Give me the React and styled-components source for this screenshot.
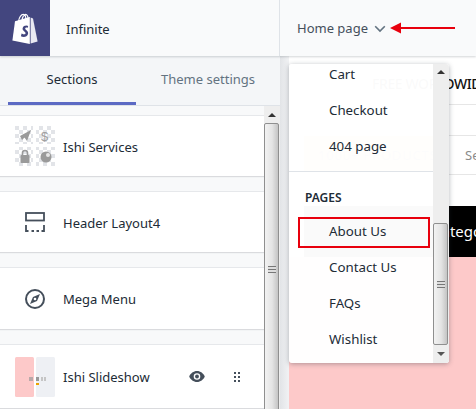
import React from "react";
import styled, { createGlobalStyle } from "styled-components";

const Global = createGlobalStyle`
  html, body { margin: 0; padding: 0; width: 476px; height: 409px; overflow: hidden; background: #fff; }
  * { box-sizing: border-box; }
  body { font-family: "Noto Sans", "Open Sans", sans-serif; font-size: 13px; color: #212b36; }
`;

const Page = styled.div`
  position: relative;
  width: 476px;
  height: 409px;
  overflow: hidden;
  display: flex;
  flex-direction: column;
`;
const TopBar = styled.header`
  flex: 0 0 56px;
  display: flex;
  align-items: stretch;
  background: #f9fafb;
  box-shadow: 0 1px 2px rgba(33, 43, 54, 0.2);
  position: relative;
  z-index: 2;
`;
const LogoBox = styled.div`
  flex: 0 0 50px;
  background: #43467f;
  display: flex;
  align-items: center;
  justify-content: center;
`;
const StoreName = styled.div`
  flex: 0 0 230px;
  padding: 1px 0 0 16px;
  display: flex;
  align-items: center;
  font-size: 13px;
  border-right: 1px solid #dfe3e8;
`;
const PagePicker = styled.div`
  flex: 1;
  display: flex;
  align-items: center;
  padding-left: 17px;
  font-size: 13px;
  color: #454f5b;
  gap: 6px;
`;
const Main = styled.div`
  flex: 1;
  display: flex;
  min-height: 0;
`;
const Sidebar = styled.aside`
  flex: 0 0 280px;
  display: flex;
  flex-direction: column;
  min-height: 0;
  background: #f4f6f8;
`;
const Tabs = styled.nav`
  flex: 0 0 49px;
  display: flex;
  padding-left: 8px;
`;
const Tab = styled.div`
  flex: ${(p) => (p.$active ? "0 0 128px" : "1")};
  height: 49px;
  text-align: center;
  line-height: 47px;
  font-size: 13px;
  color: ${(p) => (p.$active ? "#212b36" : "#637381")};
  border-bottom: 3px solid ${(p) => (p.$active ? "#5c6ac4" : "transparent")};
`;
const SideBody = styled.div`
  flex: 1;
  display: flex;
  min-height: 0;
  border-top: 1px solid #dfe3e8;
`;
const SectionList = styled.div`
  flex: 1;
  display: flex;
  flex-direction: column;
  gap: 15px;
  overflow: hidden;
  background: #f8f9fa;
  padding-top: 9px;
`;
const Section = styled.div`
  flex: 0 0 ${(p) => p.$h}px;
  display: flex;
  align-items: center;
  background: #fff;
  padding-left: 15px;
  gap: 8px;
  font-size: 13px;
  color: #212b36;
  border-top: 1px solid #e6e8eb;
  box-shadow: 0 1px 1px rgba(33, 43, 54, 0.14);
`;
const Thumb = styled.div`
  flex: 0 0 40px;
  height: 40px;
  display: flex;
  align-items: center;
  justify-content: center;
`;
const SectionName = styled.span`
  flex: 1;
  color: #212b36;
  padding-top: 1px;
`;
const Actions = styled.div`
  display: flex;
  align-items: center;
  gap: 29px;
  padding-right: 24px;
`;
const Scrollbar = styled.div`
  flex: 0 0 16px;
  display: flex;
  flex-direction: column;
  background: #eeeeee;
  overflow: hidden;
`;
const ScrollBtn = styled.div`
  flex: 0 0 ${(p) => p.$h || 14}px;
  display: flex;
  align-items: center;
  justify-content: center;
`;
const Triangle = styled.i`
  display: block;
  width: 0;
  height: 0;
  border-left: 4px solid transparent;
  border-right: 4px solid transparent;
  ${(p) => (p.$down ? "border-top: 4px solid #555;" : "border-bottom: 4px solid #333;")}
`;
const ScrollGap = styled.div`
  flex: 0 0 ${(p) => p.$h}px;
`;
const ScrollThumb = styled.div`
  flex: 0 0 ${(p) => p.$h}px;
  border: 1px solid #8f8f8f;
  border-radius: 2px;
  background: linear-gradient(90deg, #f2f2f2 0%, #e4e4e4 55%, #c4c4c4 100%);
  margin-right: 1px;
  display: flex;
  align-items: center;
  justify-content: center;
`;
const Grip = styled.i`
  display: block;
  width: 8px;
  height: 7px;
  background: repeating-linear-gradient(180deg, #777 0 1px, #ddd 1px 3px);
`;
const Preview = styled.section`
  flex: 1;
  display: flex;
  min-width: 0;
`;
const Gutter = styled.div`
  flex: 0 0 9px;
  background: linear-gradient(90deg, #e2e4e7, #f1f2f4);
`;
const Store = styled.div`
  flex: 1;
  display: flex;
  flex-direction: column;
  background: #fff;
  min-width: 0;
  padding-top: 8px;
`;
const Announce = styled.div`
  flex: 0 0 41px;
  border-bottom: 1px solid #e6e6e6;
  font-size: 14px;
  font-weight: 500;
  letter-spacing: -0.4px;
  line-height: 40px;
  color: #111;
  white-space: nowrap;
  overflow: hidden;
  padding-left: 83px;
`;
const TopStrip = styled.div`
  flex: 0 0 31px;
  border-bottom: 1px solid #e6e6e6;
`;
const PromoRow = styled.div`
  flex: 0 0 39px;
  border-bottom: 1px solid #e6e6e6;
  display: flex;
  align-items: center;
  padding-left: 15px;
  color: #8a8a8a;
  font-size: 13px;
  white-space: nowrap;
  overflow: hidden;
`;
const PromoBox = styled.div`
  flex: 0 0 129px;
  height: 36px;
  margin-top: -3px;
  background: #ffb070;
  color: #777;
  line-height: 38px;
  padding-left: 14px;
  letter-spacing: 0.8px;
  overflow: hidden;
`;
const SearchHint = styled.span`
  margin-left: 32px;
`;
const Spacer = styled.div`
  flex: 0 0 31px;
`;
const BlackBand = styled.div`
  flex: 0 0 51px;
  margin-left: 15px;
  padding-left: 128px;
  background: #000;
  color: #fff;
  font-size: 15px;
  line-height: 50px;
  white-space: nowrap;
  overflow: hidden;
`;
const Pink = styled.div`
  flex: 1;
  background: #fdc9c9;
`;
const Menu = styled.div`
  position: absolute;
  left: 289px;
  top: 64px;
  width: 160px;
  height: 299px;
  background: rgba(255, 255, 255, 0.98);
  border-radius: 3px;
  box-shadow: 0 1px 5px rgba(33, 43, 54, 0.35);
  display: flex;
  z-index: 3;
  overflow: hidden;
`;
const MenuBody = styled.div`
  flex: 0 0 144px;
  display: flex;
  flex-direction: column;
  margin-top: -8px;
`;
const MenuItem = styled.div`
  flex: 0 0 36px;
  display: flex;
  align-items: center;
  padding-left: 40px;
  font-size: 13.3px;
  color: #212b36;
`;
const MenuDivider = styled.div`
  flex: 0 0 1px;
  background: #dfe3e8;
  margin-top: 7px;
`;
const MenuHeading = styled.div`
  flex: 0 0 auto;
  padding: 18px 0 7px 16px;
  font-size: 12px;
  line-height: 16px;
  font-weight: 600;
  color: #212b36;
`;
const HighlightBox = styled.div`
  position: absolute;
  left: 298px;
  top: 217px;
  width: 132px;
  height: 31px;
  border: 2px solid #e8000d;
  z-index: 4;
`;
const Arrow = styled.svg`
  position: absolute;
  left: 390px;
  top: 20px;
  z-index: 4;
`;

const ShopifyLogo = () => (
  <svg width="26" height="31" viewBox="0 0 26 31" fill="none">
    <path d="M17.4 4 3 8.2.4 27.5 17.8 31V4z" fill="#fff" />
    <path d="M18.6 4.6 21 5.4l4.6 23.2-7 2V4.6z" fill="#e9e9f2" />
    <path d="M6.6 8c.5-3.7 2.6-6.6 4.6-6.6 2 0 2.8 2.4 2.6 5M10 6.8c.4-2.8 1.6-4.6 3.4-5.4 1.8.3 2.6 2.3 2.6 4" stroke="#fff" strokeWidth="1.1" />
    <path d="M16.2 13c-1-.7-5-1-5.6 2.3-.5 2.9 3.4 3.1 2.9 5.2-.4 1.4-2.6 1-3.9.1l-.7 2.6c1.9 1.2 6.4 1.3 7.2-2.5.6-3.2-3.1-3.7-2.9-5.3.2-1 1.8-.9 2.4-.5l.6-1.9z" fill="#43467f" />
  </svg>
);
const Chevron = () => (
  <svg width="12" height="8" viewBox="0 0 12 8" fill="none" style={{ marginTop: 1 }}>
    <path d="M1.2 1.2 6 6l4.8-4.8" stroke="#637381" strokeWidth="1.6" />
  </svg>
);
const ServicesThumb = () => (
  <svg width="40" height="40" viewBox="0 0 40 40">
    <defs>
      <pattern id="chk" width="8" height="8" patternUnits="userSpaceOnUse">
        <rect width="8" height="8" fill="#fff" />
        <rect width="4" height="4" fill="#e2e4e8" />
        <rect x="4" y="4" width="4" height="4" fill="#e2e4e8" />
      </pattern>
    </defs>
    <rect width="18" height="18" fill="url(#chk)" />
    <rect x="21" width="19" height="18" fill="url(#chk)" />
    <rect y="21" width="18" height="19" fill="url(#chk)" />
    <rect x="21" y="21" width="19" height="19" fill="url(#chk)" />
    <path d="M5 10 16 4 12 15 9.5 11.5 7 14z" fill="#9a9a9a" />
    <text x="26" y="15" fontSize="13" fill="#a0a0a0" fontFamily="Liberation Sans">$</text>
    <rect x="5.5" y="29" width="9" height="8" rx="1" fill="#9a9a9a" />
    <path d="M7.5 29v-2a2.5 2.5 0 0 1 5 0v2" stroke="#9a9a9a" strokeWidth="1.6" fill="none" />
    <circle cx="31" cy="31" r="5.5" fill="#9a9a9a" />
    <circle cx="33" cy="29" r="2" fill="#e6e6e6" />
  </svg>
);
const HeaderIcon = () => (
  <svg width="20" height="20" viewBox="0 0 20 20" fill="none" stroke="#454f5b" strokeWidth="1.8">
    <rect x="1" y="1" width="18" height="7.5" />
    <path d="M1 13v6h2.5M6.5 19h2.5M11.5 19h2.5M16.5 19H19v-6" />
  </svg>
);
const CompassIcon = () => (
  <svg width="20" height="20" viewBox="0 0 20 20" fill="none">
    <circle cx="10" cy="10" r="9" stroke="#454f5b" strokeWidth="2" />
    <path d="M15 5 12 12 5 15 8 8z" fill="#454f5b" />
    <circle cx="10" cy="10" r="1.3" fill="#fff" />
  </svg>
);
const SlideThumb = () => (
  <svg width="40" height="40" viewBox="0 0 40 40">
    <rect width="19" height="40" rx="1.5" fill="#fdc9c9" />
    <rect x="21" width="19" height="40" rx="1.5" fill="#eef0f4" />
    <rect x="14" y="20" width="4" height="4" fill="#b9a8a8" />
    <rect x="21" y="20" width="3" height="4" fill="#999" />
    <rect x="26" y="20" width="2" height="4" fill="#c5c5c5" />
    <rect x="29" y="20" width="2" height="4" fill="#c5c5c5" />
    <rect x="21" y="26" width="3" height="2" fill="#eda100" />
  </svg>
);
const EyeIcon = () => (
  <svg width="16" height="11" viewBox="0 0 17 12">
    <path fillRule="evenodd" d="M8.5 0C4.6 0 1.5 2.6 0 6c1.5 3.4 4.6 6 8.5 6s7-2.6 8.5-6c-1.5-3.4-4.6-6-8.5-6zm0 9.6a3.6 3.6 0 1 1 0-7.2 3.6 3.6 0 0 1 0 7.2z" fill="#454f5b" />
    <circle cx="8.5" cy="6" r="2.1" fill="#454f5b" />
  </svg>
);
const DragIcon = () => (
  <svg width="6" height="10" viewBox="0 0 6 10" fill="#454f5b">
    {[0, 4, 8].map((y) => (
      <g key={y}>
        <rect x="0" y={y} width="2" height="2" />
        <rect x="4" y={y} width="2" height="2" />
      </g>
    ))}
  </svg>
);

export default function App() {
  return (
    <Page>
      <Global />
      <TopBar>
        <LogoBox><ShopifyLogo /></LogoBox>
        <StoreName>Infinite</StoreName>
        <PagePicker>Home page <Chevron /></PagePicker>
      </TopBar>
      <Main>
        <Sidebar>
          <Tabs>
            <Tab $active>Sections</Tab>
            <Tab>Theme settings</Tab>
          </Tabs>
          <SideBody>
            <SectionList>
              <Section $h={61}>
                <Thumb><ServicesThumb /></Thumb>
                <SectionName>Ishi Services</SectionName>
              </Section>
              <Section $h={61}>
                <Thumb><HeaderIcon /></Thumb>
                <SectionName>Header Layout4</SectionName>
              </Section>
              <Section $h={62}>
                <Thumb><CompassIcon /></Thumb>
                <SectionName>Mega Menu</SectionName>
              </Section>
              <Section $h={64}>
                <Thumb><SlideThumb /></Thumb>
                <SectionName>Ishi Slideshow</SectionName>
                <Actions><EyeIcon /><DragIcon /></Actions>
              </Section>
            </SectionList>
            <Scrollbar>
              <ScrollBtn $h={17}><Triangle /></ScrollBtn>
              <ScrollThumb $h={292}><Grip /></ScrollThumb>
            </Scrollbar>
          </SideBody>
        </Sidebar>
        <Preview>
          <Gutter />
          <Store>
            <Announce>FREE WORLDWIDE</Announce>
            <TopStrip />
            <PromoRow>
              <PromoBox>1000+ PRODUCTS</PromoBox>
              <SearchHint>Search</SearchHint>
            </PromoRow>
            <Spacer />
            <BlackBand>Category</BlackBand>
            <Pink />
          </Store>
        </Preview>
      </Main>
      <Menu>
        <MenuBody>
          <MenuItem>Cart</MenuItem>
          <MenuItem>Checkout</MenuItem>
          <MenuItem>404 page</MenuItem>
          <MenuDivider />
          <MenuHeading>PAGES</MenuHeading>
          <MenuItem>About Us</MenuItem>
          <MenuItem>Contact Us</MenuItem>
          <MenuItem>FAQs</MenuItem>
          <MenuItem>Wishlist</MenuItem>
        </MenuBody>
        <Scrollbar>
          <ScrollBtn $h={16}><Triangle /></ScrollBtn>
          <ScrollGap $h={143} />
          <ScrollThumb $h={122}><Grip /></ScrollThumb>
          <ScrollBtn $h={18}><Triangle $down /></ScrollBtn>
        </Scrollbar>
      </Menu>
      <HighlightBox />
      <Arrow width="66" height="16" viewBox="0 0 66 16">
        <path d="M0 8 11 2.5V7H65V9H11v4.5z" fill="#e8000d" />
      </Arrow>
    </Page>
  );
}
